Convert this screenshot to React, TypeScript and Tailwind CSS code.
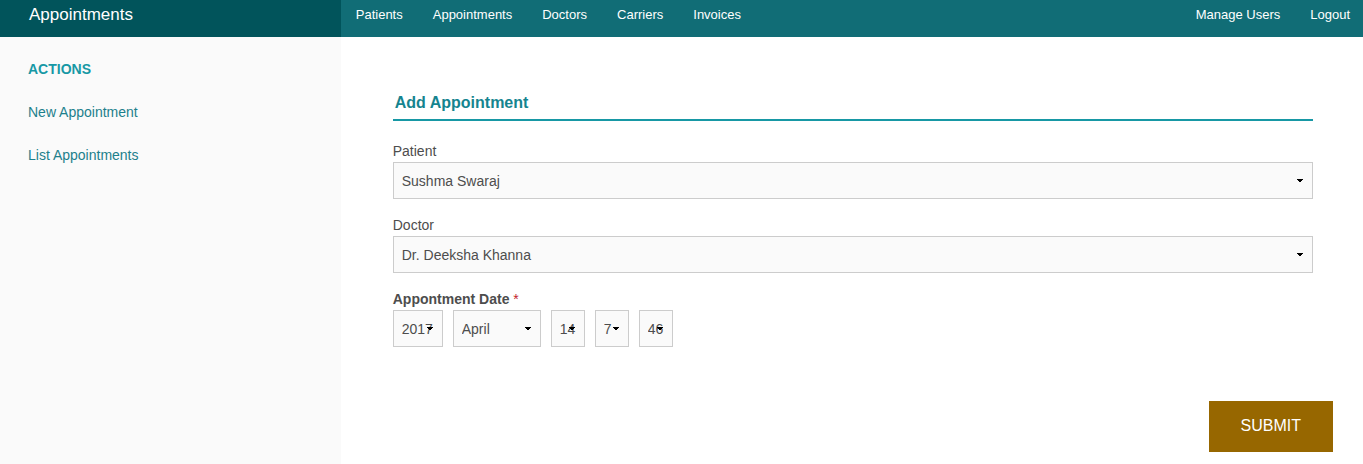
import { useId } from 'react';

const mainLinks = ['Patients', 'Appointments', 'Doctors', 'Carriers', 'Invoices'];
const userLinks = ['Manage Users', 'Logout'];
const actions = ['New Appointment', 'List Appointments'];

const months = [
  'January', 'February', 'March', 'April', 'May', 'June',
  'July', 'August', 'September', 'October', 'November', 'December',
];

function range(from: number, to: number): string[] {
  return Array.from({ length: to - from + 1 }, (_, i) => String(from + i));
}

type SelectProps = {
  id?: string;
  label?: string;
  options: string[];
  value: string;
  className: string;
};

function Select({ id, label, options, value, className }: SelectProps) {
  return (
    <div className={`relative ${className}`}>
      <select
        id={id}
        aria-label={label}
        defaultValue={value}
        className="block h-[37px] w-full appearance-none rounded-none border border-[#cccccc] bg-[#fafafa] px-2 text-sm text-[#4d4d4d]"
      >
        {options.map((option) => (
          <option key={option}>{option}</option>
        ))}
      </select>
      <svg
        viewBox="0 0 6 3"
        className="pointer-events-none absolute top-[17px] right-[10px] h-[3px] w-[6px]"
        aria-hidden="true"
      >
        <path d="M0 0h6v1H5v1H4v1H2V2H1V1H0z" fill="#000" />
      </svg>
    </div>
  );
}

function Field({ label, options }: { label: string; options: string[] }) {
  const id = useId();
  return (
    <div>
      <label htmlFor={id} className="block leading-[21px]">
        {label}
      </label>
      <Select id={id} options={options} value={options[0]} className="w-full" />
    </div>
  );
}

function NavLinks({ items }: { items: string[] }) {
  return (
    <ul className="flex gap-[30px]">
      {items.map((item) => (
        <li key={item}>
          <a href="#" className="block">
            {item}
          </a>
        </li>
      ))}
    </ul>
  );
}

export default function App() {
  return (
    <div className="flex min-h-screen flex-col bg-white font-['Liberation_Sans',Arial,sans-serif] text-sm text-[#4d4d4d]">
      <header className="flex bg-[#116d76] text-[13px] leading-[29px] text-white">
        <h1 className="w-1/4 shrink-0 bg-[#01545b] pb-2 pl-[29px] text-[17px] leading-[29px]">
          <a href="#">Appointments</a>
        </h1>
        <nav className="flex grow justify-between pr-[13px] pb-2 pl-[15px]">
          <NavLinks items={mainLinks} />
          <NavLinks items={userLinks} />
        </nav>
      </header>

      <div className="flex grow">
        <aside className="w-1/4 shrink-0 bg-[#fafafa] px-7 pt-[22px]">
          <ul className="flex flex-col gap-[22px] leading-[21px] text-[#1d808c]">
            <li className="font-bold text-[#1798a5]">ACTIONS</li>
            {actions.map((action) => (
              <li key={action}>
                <a href="#">{action}</a>
              </li>
            ))}
          </ul>
        </aside>

        <main className="grow pt-[54px] pr-[30px] pb-3 pl-[52px]">
          <form onSubmit={(event) => event.preventDefault()}>
            <div className="pr-5">
              <h2 className="mb-5 border-b-2 border-[#1798a5] pb-1 pl-0.5 text-base leading-6 font-bold text-[#15848f]">
                Add Appointment
              </h2>
              <div className="flex flex-col gap-4">
                <Field label="Patient" options={['Sushma Swaraj']} />
                <Field label="Doctor" options={['Dr. Deeksha Khanna']} />
                <fieldset>
                  <legend className="leading-[21px]">
                    <b>Appontment Date</b> <span className="text-[#c3232d]">*</span>
                  </legend>
                  <div className="flex gap-[10px]">
                    <Select label="Year" options={range(2012, 2022)} value="2017" className="w-[50px]" />
                    <Select label="Month" options={months} value="April" className="w-[88px]" />
                    <Select label="Day" options={range(1, 31)} value="14" className="w-[34px]" />
                    <Select label="Hour" options={range(0, 23)} value="7" className="w-[34px]" />
                    <Select label="Minute" options={range(0, 59)} value="46" className="w-[34px]" />
                  </div>
                </fieldset>
              </div>
            </div>
            <div className="mt-[54px] flex justify-end">
              <button type="submit" className="bg-[#976700] px-8 pt-3 pb-[14px] text-base leading-[25px] text-white">
                SUBMIT
              </button>
            </div>
          </form>
        </main>
      </div>
    </div>
  );
}
